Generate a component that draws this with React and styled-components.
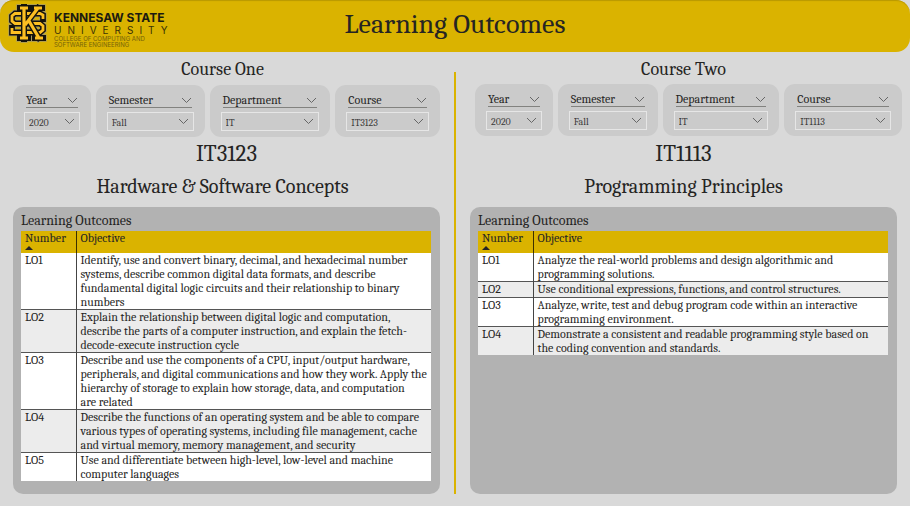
import React from 'react';
import styled, { createGlobalStyle } from 'styled-components';

const GlobalStyle = createGlobalStyle`
  *, *::before, *::after { box-sizing: border-box; }
  body {
    margin: 0;
    background: #d9d9d9;
    color: #252423;
    font-family: Cambria, Caladea, "Liberation Serif", serif;
    font-size: 12px;
    line-height: 14px;
  }
`;

const Page = styled.div`
  display: flex;
  flex-direction: column;
  min-height: 100vh;
`;

const Header = styled.header`
  display: grid;
  grid-template-columns: 1fr auto 1fr;
  align-items: start;
  height: 52px;
  padding: 0 8px;
  background: #dab300;
  border-radius: 14px;
  box-shadow: inset 0 2px 1px -1px #b99800;
`;

const PageTitle = styled.h1`
  margin: 8px 0 0;
  font-size: 28px;
  line-height: 32px;
  font-weight: 400;
`;

const Brand = styled.div`
  display: flex;
  align-items: flex-start;
  padding-top: 4px;
  gap: 2px;
`;

const BrandText = styled.div`
  display: flex;
  flex-direction: column;
  padding-left: 4px;
  margin-top: 7px;
  font-family: Inter, "Open Sans", sans-serif;
  white-space: nowrap;
`;

const BrandName = styled.span`
  font-size: 12px;
  line-height: 13px;
  font-weight: 700;
  color: #1c1a10;
`;

const BrandKind = styled.span`
  font-size: 10px;
  line-height: 12px;
  letter-spacing: 6px;
  color: #3a3206;
`;

const BrandUnit = styled.span`
  font-size: 6px;
  line-height: 6px;
  color: #75620a;
`;

const Main = styled.main`
  flex: 1;
  display: grid;
  grid-template-columns: 1fr 2px 1fr;
  column-gap: 14px;
  padding: 7px 13px 12px;
`;

const Divider = styled.div`
  margin-top: 13px;
  background: #dab300;
`;

const Column = styled.section`
  display: flex;
  flex-direction: column;
  min-width: 0;
`;

const Heading = styled.h2`
  margin: 0;
  padding-right: ${(p) => (p.$inset ? '8px' : '0')};
  text-align: center;
  font-size: 18px;
  line-height: 21px;
  font-weight: 400;
`;

const CourseCode = styled(Heading)`
  margin-top: 6px;
  font-size: 23px;
  line-height: 22px;
`;

const CourseTitle = styled(Heading)`
  margin-top: 11px;
  font-size: 20px;
  line-height: 22px;
`;

const Filters = styled.form`
  display: grid;
  grid-template-columns: ${(p) => p.$columns};
  column-gap: 5px;
  align-items: start;
  height: 57px;
  padding-top: ${(p) => (p.$raised ? '4px' : '5px')};
  margin: ${(p) => (p.$raised ? '0 -5px 0 5px' : '0')};
`;

const FilterCard = styled.div`
  min-width: 0;
  padding: 8px 11px 6px;
  background: #cbcbcb;
  border-radius: 11px;
`;

const FilterLabel = styled.label`
  display: flex;
  align-items: center;
  justify-content: space-between;
  height: 15px;
  margin: 0 2px 4px;
  border-bottom: 1px solid #82827f;
`;

const SelectBox = styled.div`
  display: grid;
  align-items: center;
  height: 19px;
  border: 1px solid #e6e6e6;

  > * { grid-area: 1 / 1; }
  > svg { justify-self: end; margin-right: 4px; pointer-events: none; }
`;

const Select = styled.select`
  appearance: none;
  width: 100%;
  height: 17px;
  padding: 3px 4px 0;
  border: 0;
  background: transparent;
  color: #3b3a39;
  font: 10px/14px Cambria, Caladea, "Liberation Serif", serif;
`;

const Panel = styled.div`
  flex: 1;
  margin-top: 9px;
  padding: 7px 9px 10px 8px;
  background: #b2b2b2;
  border-radius: 10px;
`;

const Table = styled.table`
  width: 100%;
  border-collapse: collapse;
  table-layout: fixed;
`;

const Caption = styled.caption`
  height: 17px;
  text-align: left;
  font-size: 14px;
  line-height: 14px;
`;

const NumberCol = styled.col`
  width: 55px;
`;

const Th = styled.th`
  height: 22px;
  padding: 1px 4px 0;
  line-height: 13px;
  text-align: left;
  vertical-align: top;
  font-weight: 400;
  background: #dab300;

  & + & { border-left: 1px solid #3b3000; }
`;

const SortMark = styled.svg`
  display: block;
`;

const Row = styled.tr`
  background: #fff;
  &:nth-child(even) { background: #ececec; }
  & + & { border-top: 1px solid #555; }
`;

const Td = styled.td`
  height: 16px;
  padding: 0 4px;
  vertical-align: top;

  & + & { border-left: 1px solid #444; }
`;

const Chevron = () => (
  <svg width="11" height="7" viewBox="0 0 11 7" fill="none" stroke="#666" aria-hidden="true">
    <path d="M1 1 L5.5 5.5 L10 1" />
  </svg>
);

const K_PATH = 'M12 4H20M16 3V35M12 34H20M26 4H34M30 4L17 21M21 17L31 34M27 34H35';
const S_PATH =
  'M35 15V11L32 9.5H7L4 12V17L7 19.5H32L35 22V26L32 28.5H4V24';

const Logo = () => (
  <svg width="40" height="39" viewBox="0 0 40 39" role="img" aria-label="KS" fill="none">
    <g stroke="#a89b62" strokeWidth="7.4" strokeLinecap="square">
      <path d={S_PATH} />
      <path d={K_PATH} />
    </g>
    <path d={S_PATH} stroke="#15130c" strokeWidth="5.8" strokeLinecap="square" />
    <path d={S_PATH} stroke="#fcbf22" strokeWidth="2.8" />
    <path d={K_PATH} stroke="#15130c" strokeWidth="6" strokeLinecap="square" />
    <path d={K_PATH} stroke="#fcbf22" strokeWidth="3.2" />
  </svg>
);

const COURSES = [
  {
    id: 'one',
    label: 'Course One',
    code: 'IT3123',
    title: 'Hardware & Software Concepts',
    columns: '78fr 109fr 121fr 105fr',
    inset: true,
    filters: [['Year', '2020'], ['Semester', 'Fall'], ['Department', 'IT'], ['Course', 'IT3123']],
    outcomes: [
      'Identify, use and convert binary, decimal, and hexadecimal number systems, describe common digital data formats, and describe fundamental digital logic circuits and their relationship to binary numbers',
      'Explain the relationship between digital logic and computation, describe the parts of a computer instruction, and explain the fetch-decode-execute instruction cycle',
      'Describe and use the components of a CPU, input/output hardware, peripherals, and digital communications and how they work. Apply the hierarchy of storage to explain how storage, data, and computation are\u00a0related',
      'Describe the functions of an operating system and be able to compare various types of operating systems, including file management, cache and virtual memory, memory management, and security',
      'Use and differentiate between high-level, low-level and machine computer languages',
    ],
  },
  {
    id: 'two',
    label: 'Course Two',
    code: 'IT1113',
    title: 'Programming Principles',
    columns: '78fr 100fr 117fr 118fr',
    raised: true,
    filters: [['Year', '2020'], ['Semester', 'Fall'], ['Department', 'IT'], ['Course', 'IT1113']],
    outcomes: [
      'Analyze the real-world problems and design algorithmic and programming solutions.',
      'Use conditional expressions, functions, and control structures.',
      'Analyze, write, test and debug program code within an interactive programming environment.',
      'Demonstrate a consistent and readable programming style based on the coding convention and standards.',
    ],
  },
];

const Filter = ({ id, label, value }) => (
  <FilterCard>
    <FilterLabel htmlFor={id}>
      {label}
      <Chevron />
    </FilterLabel>
    <SelectBox>
      <Select id={id} defaultValue={value}>
        <option>{value}</option>
      </Select>
      <Chevron />
    </SelectBox>
  </FilterCard>
);

const Outcomes = ({ items }) => (
  <Table>
    <Caption>Learning Outcomes</Caption>
    <colgroup>
      <NumberCol />
      <col />
    </colgroup>
    <thead>
      <tr>
        <Th scope="col" aria-sort="ascending">
          Number
          <SortMark width="8" height="6" viewBox="0 0 8 6" aria-hidden="true">
            <path d="M0 5L4 1L8 5Z" fill="#252423" />
          </SortMark>
        </Th>
        <Th scope="col">Objective</Th>
      </tr>
    </thead>
    <tbody>
      {items.map((text, i) => (
        <Row key={text}>
          <Td>{`LO${i + 1}`}</Td>
          <Td>{text}</Td>
        </Row>
      ))}
    </tbody>
  </Table>
);

const Course = ({ course }) => (
  <Column>
    <Heading $inset={course.inset}>{course.label}</Heading>
    <Filters $columns={course.columns} $raised={course.raised}>
      {course.filters.map(([label, value]) => (
        <Filter key={label} id={`${course.id}-${label}`} label={label} value={value} />
      ))}
    </Filters>
    <CourseCode as="h3">{course.code}</CourseCode>
    <CourseTitle as="h3" $inset={course.inset}>{course.title}</CourseTitle>
    <Panel>
      <Outcomes items={course.outcomes} />
    </Panel>
  </Column>
);

export default function App() {
  return (
    <Page>
      <GlobalStyle />
      <Header>
        <Brand>
          <Logo />
          <BrandText>
            <BrandName>KENNESAW STATE</BrandName>
            <BrandKind>UNIVERSITY</BrandKind>
            <BrandUnit>COLLEGE OF COMPUTING AND</BrandUnit>
            <BrandUnit>SOFTWARE ENGINEERING</BrandUnit>
          </BrandText>
        </Brand>
        <PageTitle>Learning Outcomes</PageTitle>
      </Header>
      <Main>
        <Course course={COURSES[0]} />
        <Divider />
        <Course course={COURSES[1]} />
      </Main>
    </Page>
  );
}
